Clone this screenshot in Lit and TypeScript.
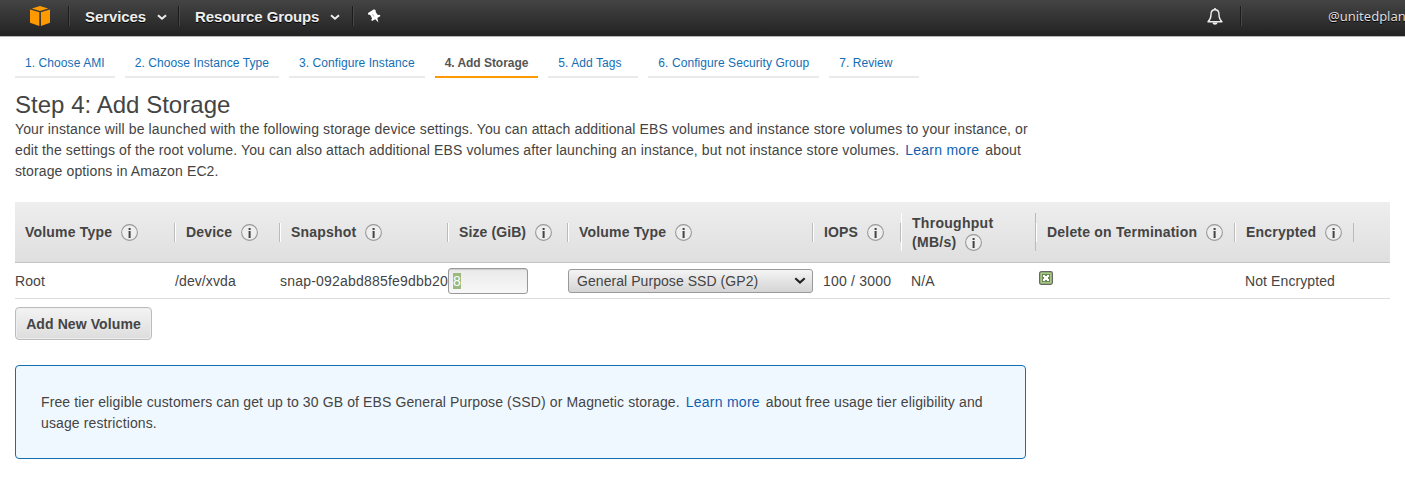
import { LitElement, html, css } from "lit";
import { customElement, property } from "lit/decorators.js";

@customElement("info-icon")
class InfoIcon extends LitElement {
  static styles = css`
    :host { display: inline-block; width: 17px; height: 17px; margin-left: 9px; vertical-align: -4px; }
    svg { display: block; }
  `;
  render() {
    return html`<svg width="17" height="17" viewBox="0 0 17 17">
      <circle cx="8.5" cy="8.5" r="7.9" fill="#eee" stroke="#999" stroke-width="1.1" />
      <path d="M7.6 4h2v2h-2zM7.6 7h2v7h-2z" fill="#444" />
      <path d="M7 7h.6v1H7zM7 13h.6v1H7z" fill="#999" />
    </svg>`;
  }
}

@customElement("top-bar")
class TopBar extends LitElement {
  static styles = css`
    :host { display: flex; box-sizing: border-box; height: 37px; background: linear-gradient(#444, #222); border-bottom: 1px solid #b5b5b5;
      color: #eee; font: bold 15px/34px "Liberation Sans", Arial, sans-serif; text-shadow: 0 1px 0 #000; overflow: hidden; white-space: nowrap; }
    svg { display: block; flex: none; }
    .logo { margin: 6px 18px 0 30px; }
    .sep { flex: none; width: 1px; height: 20px; margin-top: 6px; background: #1c1c1c; border-right: 1px solid #484848; }
    .item { display: flex; flex: none; box-sizing: border-box; padding-left: 15px; letter-spacing: -.1px; }
    .services { width: 108px; }
    .groups { width: 172px; }
    .caret { margin: 14px 0 0 11px; }
    .pin { margin: 9px 0 0 14px; }
    .bell { margin: 8px 17px 0 auto; }
    .user { width: 77px; flex: none; margin-left: 86px; font: 13px/33px "Noto Sans", sans-serif; color: #ddd; }
  `;
  caret() {
    return html`<svg class="caret" width="10" height="7" viewBox="0 0 10 7"><path d="M1 1.2l4 3.5 4-3.5" fill="none" stroke="#eee" stroke-width="2" /></svg>`;
  }
  render() {
    return html`
      <svg class="logo" width="20" height="21" viewBox="0 0 20 21" fill="#f90">
        <path d="M10 0l8.2 2.4L10 5 1.8 2.4zM0 3.5l9.3 2.8V20L0 16.8zM20 3.5v13.3L10.9 20V6.3z" />
      </svg>
      <span class="sep"></span>
      <span class="item services">Services${this.caret()}</span>
      <span class="sep"></span>
      <span class="item groups">Resource Groups${this.caret()}</span>
      <span class="sep"></span>
      <svg class="pin" width="13" height="15" viewBox="0 0 13 15">
        <path d="M6 .2l1.8 1.2-.1 1.5 2.1 3 1.8-.1.9 1.2-3.2 2 1.1 4.5-3.1-3.2-3.3 1.8-.8-1.1.9-1.6-1.8-3.4L.1 5.6 0 4.1z" fill="#fff" />
        <path d="M4.3 4.9l1.6 2.6" stroke="#999" stroke-width=".8" />
      </svg>
      <svg class="bell" width="16" height="18" viewBox="0 0 16 18">
        <path d="M8 1.8c-3 0-4 2.2-4 4.7 0 4-1 5.5-3 7.2h14c-2-1.7-3-3.2-3-7.2 0-2.5-1-4.7-4-4.7z" fill="none" stroke="#eee" stroke-width="1.4" stroke-linejoin="round" />
        <path d="M7.2 0h1.6v2H7.2zM5.5 14.5h5c0 3-5 3-5 0z" fill="#eee" />
      </svg>
      <span class="sep"></span>
      <span class="user">@unitedplanet</span>`;
  }
}

@customElement("wizard-steps")
class WizardSteps extends LitElement {
  static styles = css`
    :host { display: flex; gap: 10px; padding-top: 16px; font-size: 12px; line-height: 20px; }
    .step { box-sizing: border-box; height: 25px; min-width: 90px; padding: 0 10px; border-bottom: 2px solid #eaeaea; color: #146eb4; white-space: nowrap; letter-spacing: .075px; }
    .active { color: #555; font-weight: bold; border-color: #f90; letter-spacing: -.04px; }
  `;
  @property({ type: Array }) steps: string[] = [];
  @property({ type: Number }) current = 0;
  render() {
    return this.steps.map((s, i) => html`<span class="step ${i + 1 === this.current ? "active" : ""}">${i + 1}. ${s}</span>`);
  }
}

@customElement("volume-table")
class VolumeTable extends LitElement {
  static styles = css`
    :host { display: block; }
    .row { display: grid; grid-template-columns: 160px 105px 168px 120px 245px 88px 135px 199px 119px 1fr; align-items: center; box-sizing: border-box; white-space: nowrap; }
    .head { height: 61px; background: linear-gradient(#eee, #dfdfdf); border-bottom: 1px solid #c4c4c4; font-weight: bold; line-height: 19px; letter-spacing: .2px; }
    .th { border-left: 1px solid #fff; border-right: 1px solid #bbb; padding-left: 10px; }
    .th:first-child { border-left: 0; }
    .th:nth-child(4), .th:nth-child(6) { letter-spacing: .1px; }
    .head .th { height: 19px; }
    .head .tall { box-sizing: border-box; height: 38px; padding-top: 1px; white-space: pre-line; letter-spacing: .28px; }
    .body { height: 36px; border-bottom: 1px solid #ddd; letter-spacing: .1px; }
    .text { padding-top: 2px; }
    .digits { letter-spacing: .2px; }
    .pad { padding-left: 10px; }
    .size { box-sizing: border-box; width: 80px; height: 26px; border: 1px solid #999; border-radius: 3px; background: linear-gradient(#e9e9e9, #f8f8f8); padding: 4px; line-height: 16px; box-shadow: inset 0 1px 1px #ccc; }
    .sel { background: #9bb87e; color: #fff; }
    .select { display: flex; box-sizing: border-box; justify-content: space-between; align-items: center; height: 24px; border: 1px solid #999; border-radius: 3px; background: linear-gradient(#f4f4f4, #d4d4d4); padding: 1px 6px 0 8px; letter-spacing: .06px; }
    .check { display: block; margin: 0 0 5px 3px; }
  `;
  heads = ["Volume Type", "Device", "Snapshot", "Size (GiB)", "Volume Type", "IOPS", "Throughput\n(MB/s)", "Delete on Termination", "Encrypted"];
  render() {
    return html`
      <div class="row head">${this.heads.map((h) => html`<div class="th ${h.includes("\n") ? "tall" : ""}">${h}<info-icon></info-icon></div>`)}</div>
      <div class="row body">
        <span class="text">Root</span><span class="text">/dev/xvda</span><span class="text digits">snap-092abd885fe9dbb20</span>
        <div class="size"><span class="sel">8</span></div>
        <div class="select">General Purpose SSD (GP2)<svg width="12" height="8" viewBox="0 0 12 8"><path d="M1.3 1.3L6 5.6l4.7-4.3" fill="none" stroke="#222" stroke-width="2.2" /></svg></div>
        <span class="text digits pad">100 / 3000</span><span class="text pad">N/A</span>
        <svg class="check" width="14" height="14" viewBox="0 0 14 14">
          <rect x=".6" y=".6" width="12.8" height="12.8" rx="1.8" fill="#a3c881" stroke="#666" stroke-width="1.2" />
          <rect x="3" y="3" width="8" height="8" fill="#6d8757" />
          <path d="M4 4h2v1h2V4h2v2H9v2h1v2H8V9H6v1H4V8h1V6H4z" fill="#fff" />
        </svg>
        <span class="text pad">Not Encrypted</span>
      </div>`;
  }
}

@customElement("app-root")
class AppRoot extends LitElement {
  static styles = css`
    :host { display: block; height: 498px; overflow: hidden; background: #fff; color: #444; font: 14px/21px "Liberation Sans", Arial, sans-serif; }
    .page { padding: 0 15px; }
    h1 { margin: 13px 0 0; font-size: 24px; line-height: 28px; font-weight: normal; letter-spacing: .03px; }
    .intro { width: 1020px; margin: 0 0 20px; letter-spacing: .117px; }
    .link { color: #0f5fb0; margin: 0 2px; letter-spacing: .25px; }
    .add { box-sizing: border-box; display: block; width: 137px; height: 33px; margin: 8px 0 25px; padding: 0; border: 1px solid #bbb; border-radius: 4px; background: linear-gradient(#f3f3f3, #ddd); color: #444; font: bold 14px "Liberation Sans", Arial, sans-serif; letter-spacing: .1px; box-shadow: inset 0 0 0 1px #eee; }
    .note { box-sizing: border-box; width: 1011px; height: 94px; padding: 26px 25px; border: 1px solid #146eb4; border-radius: 4px; background: #f0f8ff; letter-spacing: .118px; }
  `;
  steps = ["Choose AMI", "Choose Instance Type", "Configure Instance", "Add Storage", "Add Tags", "Configure Security Group", "Review"];
  render() {
    return html`
      <top-bar></top-bar>
      <div class="page">
        <wizard-steps .steps=${this.steps} .current=${4}></wizard-steps>
        <h1>Step 4: Add Storage</h1>
        <p class="intro">Your instance will be launched with the following storage device settings. You can attach additional EBS volumes and instance store volumes to your instance, or edit the settings of the root volume. You can also attach additional EBS volumes after launching an instance, but not instance store volumes. <a class="link">Learn more</a> about storage options in Amazon EC2.</p>
        <volume-table></volume-table>
        <button class="add">Add New Volume</button>
        <div class="note">Free tier eligible customers can get up to 30 GB of EBS General Purpose (SSD) or Magnetic storage. <a class="link">Learn more</a> about free usage tier eligibility and usage restrictions.</div>
      </div>`;
  }
}
